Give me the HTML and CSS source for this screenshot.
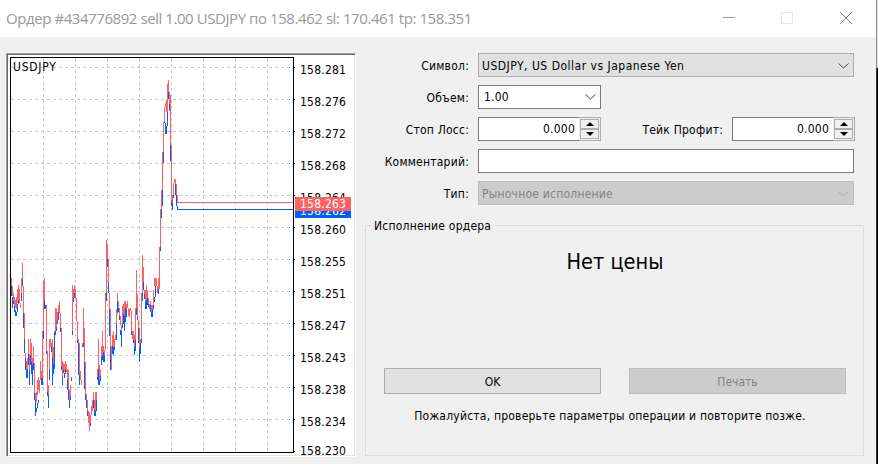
FILE: index.html
```
<!DOCTYPE html>
<html lang="ru">
<head>
    <meta charset="UTF-8">
    <title>Ордер #434776892</title>
    <link rel="stylesheet" href="styles.css">
</head>
<body>
    <div class="window">
        <header class="titlebar">
            <h1 class="title">Ордер #434776892 sell 1.00 USDJPY по 158.462 sl: 170.461 tp: 158.351</h1>
            <svg class="controls" width="130" height="12" shape-rendering="crispEdges">
                <path d="M0 5.5H12" stroke="#999"/>
                <rect x="58.5" y=".5" width="11" height="11" fill="none" stroke="#e6e6e6"/>
                <path d="M117 0L129 12M129 0L117 12" stroke="#888" shape-rendering="auto"/>
            </svg>
        </header>

        <main class="content">
            <section class="chart">
                <svg class="plot" id="plot" width="286" height="398" shape-rendering="crispEdges">
                    <g id="grid" stroke="#c8c8c8" stroke-dasharray="3 3"></g>
                    <path id="bid" fill="none" stroke="#0060ff"/>
                    <path id="ask" fill="none" stroke="#ff6060"/>
                    <rect x="2.5" y="2.5" width="283" height="395" fill="none" stroke="#000"/>
                </svg>
                <span class="symbol">USDJPY</span>
                <div class="scale">
                    <span>158.281</span>
                    <span>158.276</span>
                    <span>158.272</span>
                    <span>158.268</span>
                    <span>158.264</span>
                    <span>158.260</span>
                    <span>158.255</span>
                    <span>158.251</span>
                    <span>158.247</span>
                    <span>158.243</span>
                    <span>158.238</span>
                    <span>158.234</span>
                    <span class="last">158.230</span>
                </div>
                <span class="tag tag-bid">158.262</span>
                <span class="tag tag-ask">158.263</span>
            </section>

            <section class="side">
                <div class="form">
                    <label class="label">Символ:</label>
                    <div class="select wide"><span class="latin">USDJPY, US Dollar vs Japanese Yen</span>
                        <svg class="arrow" width="11" height="6"><path d="M.5 .5L5.5 5L10.5 .5"/></svg>
                    </div>

                    <label class="label">Объем:</label>
                    <div class="select combo">1.00
                        <svg class="arrow" width="11" height="6"><path d="M.5 .5L5.5 5L10.5 .5"/></svg>
                    </div>

                    <label class="label row3">Стоп Лосс:</label>
                    <div class="spin">
                        <span class="value">0.000</span>
                        <span class="buttons">
                            <i><svg width="8" height="4"><path d="M0 4L4 0L8 4z"/></svg></i>
                            <i><svg width="8" height="4"><path d="M0 0L4 4L8 0z"/></svg></i>
                        </span>
                    </div>
                    <label class="label">Тейк Профит:</label>
                    <div class="spin">
                        <span class="value">0.000</span>
                        <span class="buttons">
                            <i><svg width="8" height="4"><path d="M0 4L4 0L8 4z"/></svg></i>
                            <i><svg width="8" height="4"><path d="M0 0L4 4L8 0z"/></svg></i>
                        </span>
                    </div>

                    <label class="label">Комментарий:</label>
                    <div class="input wide"></div>

                    <label class="label">Тип:</label>
                    <div class="select wide disabled">Рыночное исполнение
                        <svg class="arrow" width="11" height="6"><path d="M.5 .5L5.5 5L10.5 .5"/></svg>
                    </div>
                </div>

                <fieldset class="group">
                    <legend>Исполнение ордера</legend>
                    <div class="price">Нет цены</div>
                    <div class="actions">
                        <button>OK</button>
                        <button disabled>Печать</button>
                    </div>
                    <p class="message">Пожалуйста, проверьте параметры операции и повторите позже.</p>
                </fieldset>
            </section>
        </main>
    </div>
    <div class="edge"></div>

    <script>
        // one entry per pixel column: ask top, ask bottom, bid bottom [, bid top]
        const ticks = `278,286,296 286,296,308,297 293,301,304 297,306,312 300,308,316,310 297,309,316,312
            289,303,312,304 285,300,304 289,303,303 303,308,308 278,293,301 263,279,286 286,313,328
            313,339,353 353,358,370 361,370,378 358,369,378 339,354,365 354,370,385 339,355,365 343,362,374
            358,365,385 346,363,370 363,393,400 393,400,416 392,402,412,408 380,395,408,403 377,390,403,400
            380,393,393 361,380,380 371,378,385 331,378,385 281,331,339 278,301,309 305,305,309 305,351,354
            351,392,396 385,395,408 339,369,380 339,347,347 343,347,352 339,357,385 347,364,374 331,333,369
            308,331,335 308,327,331 312,320,324 305,312,320 301,313,313 313,328,332 328,366,370
            361,377,385 363,370,373 364,372,378,373 361,370,374 364,372,372 369,380,390 370,390,400
            390,400,408 385,396,400 377,378,381 285,331,335 289,298,302 285,293,298 289,298,298 298,321,321
            321,340,343 339,343,375 343,375,385 371,380,380 380,385,385 343,346,347 308,343,347
            328,362,389 362,394,400 394,400,408 400,411,416 411,423,423 412,431,431 415,423,426 406,415,415
            400,411,411 392,400,408 400,410,416 392,411,416 392,400,411 369,377,380 339,369,385
            365,380,385 369,376,381 346,357,365 331,355,360 346,352,362 350,355,362 293,350,350
            240,293,301 244,259,267 259,282,293 293,309,336 309,347,370 346,370,370 335,346,354
            331,347,355 339,347,350 335,340,340 309,324,340 293,301,313 301,308,312 308,316,320 316,325,335,330
            325,331,347,331 306,324,328 304,314,324 301,316,331 301,308,322 304,309,317 301,308,308 308,316,316
            309,317,317 308,311,311 311,331,335 331,339,339 331,340,343 335,347,355 308,340,351 270,308,315
            294,316,320 320,328,343 328,347,362 339,343,354 293,339,343 255,293,301 267,282,290
            290,294,299 290,302,309 285,300,309 290,298,305 298,304,307 304,309,309 301,305,312 305,312,317
            305,309,317 290,305,309 278,286,302,297 278,286,297 278,286,286 286,293,293 278,289,294 247,289,289
            209,247,251 190,209,218 152,190,206 122,152,163 107,122,123 103,107,134,123 100,112,134,126
            84,112,126 80,92,99 92,104,111 95,145,161 145,200,206 195,203,210 183,195,198 179,183,183
            179,184,195 184,195,206 195,203,210,206`.trim().split(/\s+/);

        // page coordinates to plot coordinates
        const left = 8, top0 = 55;
        let ask = '', bid = '';
        ticks.forEach((row, i) => {
            const [a, b, c, d] = row.split(',').map(Number);
            const x = i + 11.5 - left;
            ask += `M${x} ${a - top0}V${b - top0}`;
            bid += `M${x} ${(d || b) - top0}V${c - top0}`;
        });
        const end = ticks.length + 10 - left;
        ask += `M${end} 147.5H285`;
        bid += `M${end} 154.5H285`;
        document.getElementById('ask').setAttribute('d', ask);
        document.getElementById('bid').setAttribute('d', bid);

        let lines = '', marks = '';
        for (let x = 35.5; x < 285; x += 32) lines += `<path d="M${x} 3V397"/>`;
        for (let y = 12.5; y < 390; y += 32) {
            lines += `<path d="M3 ${y}H285"/>`;
            marks += `M285 ${y}H287`;
        }
        document.getElementById('grid').innerHTML = lines +
            `<path d="${marks}M285 396.5H287" stroke="#000" stroke-dasharray="none"/>`;
    </script>
</body>
</html>
```
FILE: styles.css
```
* {
    box-sizing: border-box;
}
body {
    margin: 0;
    display: flex;
    width: 878px;
    height: 464px;
    overflow: hidden;
    background: #f0f0f0;
    color: #000;
    font: 12px "DejaVu Sans Condensed", "DejaVu Sans", sans-serif;
    font-stretch: condensed;
    letter-spacing: 0.22px;
}
.window {
    width: 876px;
}
.edge {
    width: 2px;
    background: linear-gradient(#e8e8e8, #e8e8e8) 1px 0 / 1px 68px no-repeat,
        linear-gradient(#888, #888) 0 0 / 1px 68px no-repeat,
        linear-gradient(90deg, #333 1px, #000 1px);
}
.titlebar {
    display: flex;
    justify-content: space-between;
    align-items: center;
    height: 37px;
    padding: 0 23px 1px 6px;
    background: #fff;
}
.title {
    margin: 0;
    font: 15px "Open Sans", sans-serif;
    letter-spacing: -0.43px;
    color: #999;
    white-space: nowrap;
}
.content {
    display: flex;
    gap: 9px;
    padding: 16px 12px 0 6px;
}

/* chart */
.chart {
    position: relative;
    display: flex;
    width: 350px;
    height: 404px;
    background: #fff;
    border: 1px solid #a0a0a0;
    border-right-color: #fff;
    border-bottom-color: #fff;
    box-shadow: inset 1px 1px #696969, inset -1px -1px #e3e3e3;
    padding: 1px;
}
.plot {
    overflow: visible;
    flex: none;
}
.symbol {
    position: absolute;
    left: 6px;
    top: 6px;
    letter-spacing: 0.75px;
}
.scale {
    display: flex;
    flex-direction: column;
    gap: 12px;
    padding: 5px 0 0 6px;
    line-height: 20px;
}
.scale .last {
    margin-top: -3px;
}
.tag {
    position: absolute;
    left: 288px;
    width: 56px;
    height: 14px;
    padding-left: 5px;
    line-height: 15px;
    color: #fff;
}
.tag-bid {
    top: 150px;
    background: #0060ff;
}
.tag-ask {
    top: 143px;
    background: #ff6060;
}

/* order form */
.side {
    width: 499px;
}
.form {
    display: grid;
    grid-template-columns: 104px 123px 122px 123px;
    column-gap: 9px;
    grid-auto-rows: 24px;
    row-gap: 8px;
    width: 490px;
    grid-template-columns: 104px 123px 113px 123px;
}
.label {
    text-align: right;
    line-height: 26px;
    white-space: nowrap;
}
.wide {
    grid-column: 2 / 5;
    width: 376px;
}
.row3 {
    grid-column: 1;
}
.select {
    display: flex;
    justify-content: space-between;
    align-items: center;
    padding: 1px 4px 0 3px;
    background: #e1e1e1;
    border: 1px solid #adadad;
    white-space: nowrap;
}
.latin {
    letter-spacing: 0.5px;
}
.arrow path {
    fill: none;
    stroke: #444;
}
.combo {
    padding: 0 4px 0 5px;
    background: #fff;
    border-color: #7a7a7a;
}
.disabled {
    background: #ccc;
    border-color: #bfbfbf;
    color: #838383;
}
.disabled .arrow path {
    stroke: #aaa;
}
.input {
    background: #fff;
    border: 1px solid #7a7a7a;
}
.spin {
    display: flex;
}
.value {
    flex: 1;
    padding-right: 4px;
    text-align: right;
    line-height: 22px;
    background: #fff;
    border: 1px solid #7a7a7a;
    border-right: 0;
}
.buttons {
    display: flex;
    flex-direction: column;
    width: 22px;
    padding: 1px;
    border: 1px solid #adadad;
    border-left: 0;
}
.buttons i {
    display: flex;
    flex: 1;
    align-items: center;
    justify-content: center;
    border: 1px solid #adadad;
}

/* execution group */
.group {
    height: 239px;
    margin: 12px 0 0;
    padding: 0 17px 0 18px;
    border: 1px solid #dcdcdc;
}
.group legend {
    height: 16px;
    margin-left: -12px;
    padding: 0 2px;
    line-height: 18px;
}
.price {
    height: 135px;
    padding-top: 15px;
    font-size: 21.5px;
    line-height: 28px;
    letter-spacing: 0;
    text-align: center;
}
.actions {
    display: flex;
    justify-content: space-between;
}
.actions button {
    width: 217px;
    height: 26px;
    padding: 1px 0 0;
    background: #e1e1e1;
    border: 1px solid #adadad;
    border-radius: 0;
    font: inherit;
    color: #000;
}
.actions button:disabled {
    background: #ccc;
    border-color: #bfbfbf;
    color: #838383;
}
.message {
    margin: 14px 10px 0 0;
    line-height: 16px;
    text-align: center;
    white-space: nowrap;
}
```
